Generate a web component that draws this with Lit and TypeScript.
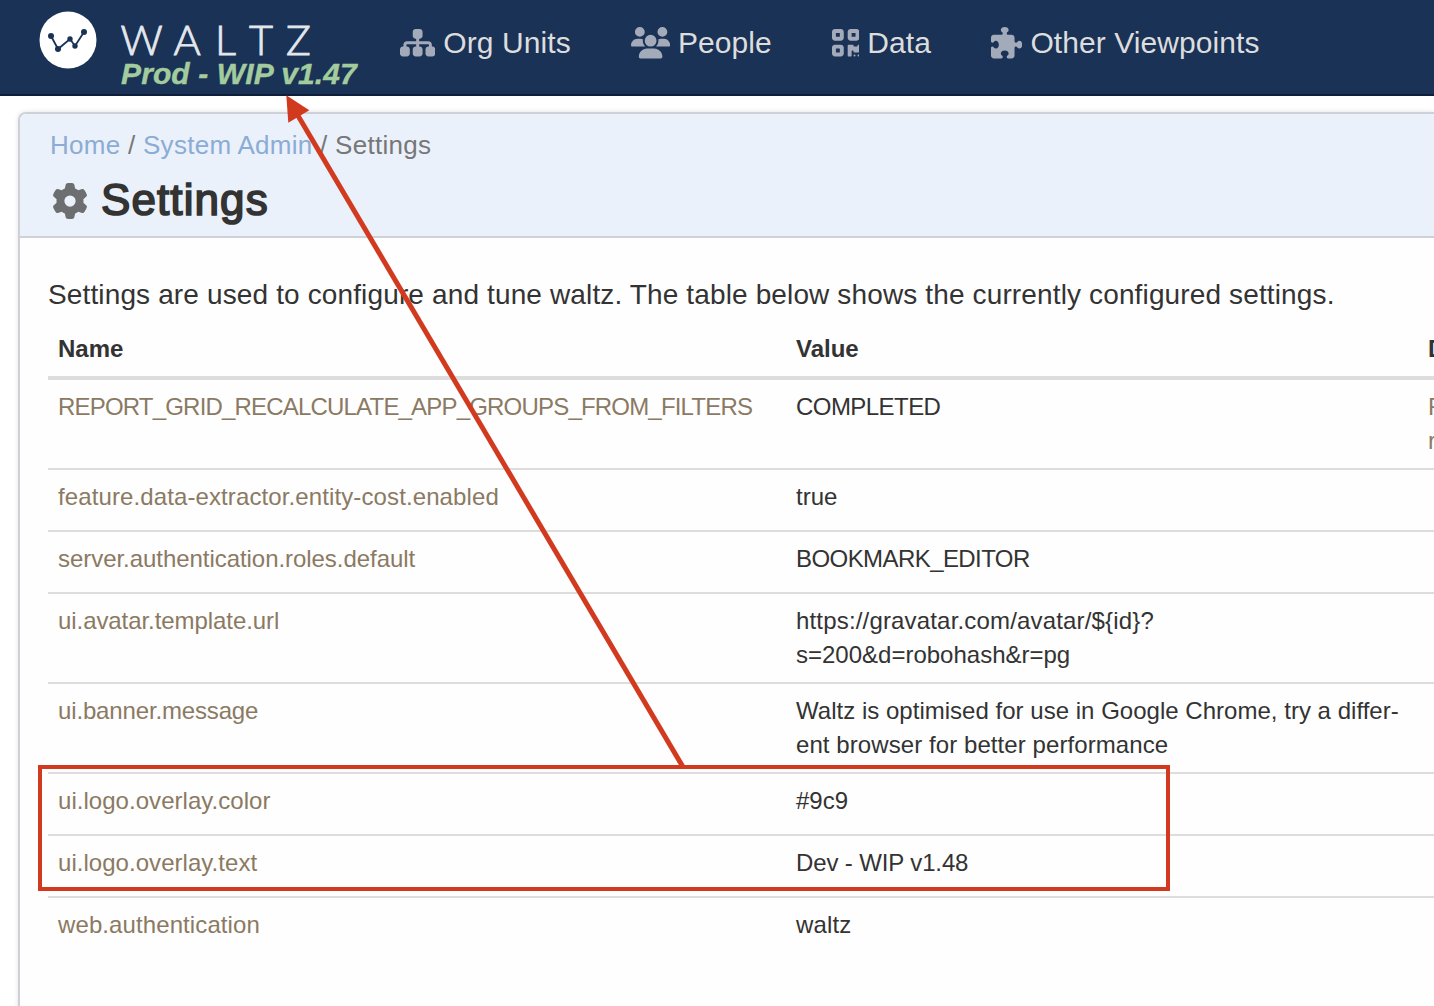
import { LitElement, html, css, svg } from "lit";
import { customElement } from "lit/decorators.js";
import { styleMap } from "lit/directives/style-map.js";

const icons = {
  sitemap: {
    w: 576,
    d: "M208 80c0-26.5 21.5-48 48-48h64c26.5 0 48 21.5 48 48v64c0 26.5-21.5 48-48 48h-8v40H464c30.9 0 56 25.1 56 56v32h8c26.5 0 48 21.5 48 48v64c0 26.5-21.5 48-48 48H464c-26.5 0-48-21.5-48-48V368c0-26.5 21.5-48 48-48h8V288c0-4.4-3.6-8-8-8H312v40h8c26.5 0 48 21.5 48 48v64c0 26.5-21.5 48-48 48H256c-26.5 0-48-21.5-48-48V368c0-26.5 21.5-48 48-48h8V280H112c-4.4 0-8 3.6-8 8v32h8c26.5 0 48 21.5 48 48v64c0 26.5-21.5 48-48 48H48c-26.5 0-48-21.5-48-48V368c0-26.5 21.5-48 48-48h8V288c0-30.9 25.1-56 56-56H264V192h-8c-26.5 0-48-21.5-48-48V80z",
  },
  users: {
    w: 640,
    d: "M144 0a80 80 0 1 1 0 160A80 80 0 1 1 144 0zM512 0a80 80 0 1 1 0 160A80 80 0 1 1 512 0zM0 298.7C0 239.8 47.8 192 106.7 192h42.7c15.9 0 31 3.5 44.6 9.7c-1.3 7.2-1.9 14.7-1.9 22.3c0 38.2 16.8 72.5 43.3 96c-.2 0-.4 0-.7 0H21.3C9.6 320 0 310.4 0 298.7zM405.3 320c-.2 0-.4 0-.7 0c26.6-23.5 43.3-57.8 43.3-96c0-7.6-.7-15-1.9-22.3c13.6-6.3 28.7-9.7 44.6-9.7h42.7C592.2 192 640 239.8 640 298.7c0 11.8-9.6 21.3-21.3 21.3H405.3zM224 224a96 96 0 1 1 192 0 96 96 0 1 1 -192 0zM128 485.3C128 411.7 187.7 352 261.3 352H378.7C452.3 352 512 411.7 512 485.3c0 14.7-11.9 26.7-26.7 26.7H154.7c-14.7 0-26.7-11.9-26.7-26.7z",
  },
  qrcode: {
    w: 448,
    d: "M0 80C0 53.5 21.5 32 48 32h96c26.5 0 48 21.5 48 48v96c0 26.5-21.5 48-48 48H48c-26.5 0-48-21.5-48-48V80zM64 96v64h64V96H64zM0 336c0-26.5 21.5-48 48-48h96c26.5 0 48 21.5 48 48v96c0 26.5-21.5 48-48 48H48c-26.5 0-48-21.5-48-48V336zm64 16v64h64V352H64zM304 32h96c26.5 0 48 21.5 48 48v96c0 26.5-21.5 48-48 48H304c-26.5 0-48-21.5-48-48V80c0-26.5 21.5-48 48-48zm80 64H320v64h64V96zM256 304c0-8.8 7.2-16 16-16h64c8.8 0 16 7.2 16 16s7.2 16 16 16h32c8.8 0 16-7.2 16-16s7.2-16 16-16s16 7.2 16 16v96c0 8.8-7.2 16-16 16H368c-8.8 0-16-7.2-16-16s-7.2-16-16-16s-16 7.2-16 16v64c0 8.8-7.2 16-16 16H272c-8.8 0-16-7.2-16-16V304zM368 480a16 16 0 1 1 0-32 16 16 0 1 1 0 32zm64 0a16 16 0 1 1 0-32 16 16 0 1 1 0 32z",
  },
  puzzle: {
    w: 512,
    d: "M192 104.8c0-9.2-5.8-17.3-13.2-22.8C167.2 73.3 160 61.3 160 48c0-26.5 28.7-48 64-48s64 21.5 64 48c0 13.3-7.2 25.3-18.8 34c-7.4 5.5-13.2 13.6-13.2 22.8v0c0 12.8 10.4 23.2 23.2 23.2H336c26.5 0 48 21.5 48 48v56.8c0 12.8 10.4 23.2 23.2 23.2v0c9.2 0 17.3-5.8 22.8-13.2c8.7-11.6 20.7-18.8 34-18.8c26.5 0 48 28.7 48 64s-21.5 64-48 64c-13.3 0-25.3-7.2-34-18.8c-5.5-7.4-13.6-13.2-22.8-13.2v0c-12.8 0-23.2 10.4-23.2 23.2V464c0 26.5-21.5 48-48 48H279.2c-12.8 0-23.2-10.4-23.2-23.2v0c0-9.2 5.8-17.3 13.2-22.8c11.6-8.7 18.8-20.7 18.8-34c0-26.5-28.7-48-64-48s-64 21.5-64 48c0 13.3 7.2 25.3 18.8 34c7.4 5.5 13.2 13.6 13.2 22.8v0c0 12.8-10.4 23.2-23.2 23.2H48c-26.5 0-48-21.5-48-48V343.2C0 330.4 10.4 320 23.2 320v0c9.2 0 17.3 5.8 22.8 13.2C54.7 344.8 66.7 352 80 352c26.5 0 48-28.7 48-64s-21.5-64-48-64c-13.3 0-25.3 7.2-34 18.8C40.5 250.2 32.4 256 23.2 256v0C10.4 256 0 245.6 0 232.8V176c0-26.5 21.5-48 48-48H168.8c12.8 0 23.2-10.4 23.2-23.2v0z",
  },
  gear: {
    w: 512,
    d: "M495.9 166.6c3.2 8.7 .5 18.4-6.4 24.6l-43.3 39.4c1.1 8.3 1.7 16.8 1.7 25.4s-.6 17.1-1.7 25.4l43.3 39.4c6.9 6.2 9.6 15.9 6.4 24.6c-4.4 11.9-9.7 23.3-15.8 34.3l-4.7 8.1c-6.6 11-14 21.4-22.1 31.2c-5.9 7.2-15.7 9.6-24.5 6.8l-55.7-17.7c-13.4 10.3-28.2 18.9-44 25.4l-12.5 57.1c-2 9.1-9 16.3-18.2 17.8c-13.8 2.3-28 3.5-42.5 3.5s-28.7-1.2-42.5-3.5c-9.2-1.5-16.2-8.7-18.2-17.8l-12.5-57.1c-15.8-6.5-30.6-15.1-44-25.4L83.1 425.9c-8.8 2.8-18.6 .3-24.5-6.8c-8.1-9.8-15.5-20.2-22.1-31.2l-4.7-8.1c-6.1-11-11.4-22.4-15.8-34.3c-3.2-8.7-.5-18.4 6.4-24.6l43.3-39.4C64.6 273.1 64 264.6 64 256s.6-17.1 1.7-25.4L22.4 191.2c-6.9-6.2-9.6-15.9-6.4-24.6c4.4-11.9 9.7-23.3 15.8-34.3l4.7-8.1c6.6-11 14-21.4 22.1-31.2c5.9-7.2 15.7-9.6 24.5-6.8l55.7 17.7c13.4-10.3 28.2-18.9 44-25.4l12.5-57.1c2-9.1 9-16.3 18.2-17.8C227.3 1.2 241.5 0 256 0s28.7 1.2 42.5 3.5c9.2 1.5 16.2 8.7 18.2 17.8l12.5 57.1c15.8 6.5 30.6 15.1 44 25.4l55.7-17.7c8.8-2.8 18.6-.3 24.5 6.8c8.1 9.8 15.5 20.2 22.1 31.2l4.7 8.1c6.1 11 11.4 22.4 15.8 34.3zM256 336a80 80 0 1 0 0-160 80 80 0 1 0 0 160z",
  },
};

const icon = (name: keyof typeof icons) =>
  html`<svg class="icon" viewBox="0 0 ${icons[name].w} 512" aria-hidden="true">${svg`<path d=${icons[name].d} />`}</svg>`;

const nav: { icon: keyof typeof icons; label: string }[] = [
  { icon: "sitemap", label: "Org Units" },
  { icon: "users", label: "People" },
  { icon: "qrcode", label: "Data" },
  { icon: "puzzle", label: "Other Viewpoints" },
];

// A line of text with its tracking in pixels.
type Line = [text: string, tracking: number];

const settings: { name: Line; value: Line[]; description?: Line[] }[] = [
  {
    name: ["REPORT_GRID_RECALCULATE_APP_GROUPS_FROM_FILTERS", -0.81],
    value: [["COMPLETED", -0.55]],
    description: [["R", 0], ["r", 0]],
  },
  { name: ["feature.data-extractor.entity-cost.enabled", 0.11], value: [["true", 0]] },
  { name: ["server.authentication.roles.default", -0.05], value: [["BOOKMARK_EDITOR", -0.57]] },
  {
    name: ["ui.avatar.template.url", -0.07],
    value: [["https://gravatar.com/avatar/${id}?", 0.17], ["s=200&d=robohash&r=pg", 0]],
  },
  {
    name: ["ui.banner.message", -0.15],
    value: [
      ["Waltz is optimised for use in Google Chrome, try a differ-", 0.02],
      ["ent browser for better performance", 0.08],
    ],
  },
  { name: ["ui.logo.overlay.color", 0.04], value: [["#9c9", 0]] },
  { name: ["ui.logo.overlay.text", 0.04], value: [["Dev - WIP v1.48", -0.13]] },
  { name: ["web.authentication", 0.1], value: [["waltz", 0.15]] },
];

const line = ([text, tracking]: Line) =>
  html`<div style=${styleMap({ letterSpacing: `${tracking}px` })}>${text}</div>`;

@customElement("app-root")
export class AppRoot extends LitElement {
  static styles = css`
    :host {
      display: block;
      position: relative;
      width: 1434px;
      height: 1006px;
      overflow: hidden;
      background: #fff;
      color: #333;
      font-family: "Liberation Sans", Arial, sans-serif;
    }
    * { box-sizing: border-box; }
    .icon { display: block; fill: currentColor; flex: none; }
    .navbar {
      display: flex;
      height: 96px;
      background: #1a3255;
      border-bottom: 2px solid #0f1f3b;
    }
    .brand { position: relative; width: 400px; flex: none; }
    .logo { display: block; width: 400px; height: 94px; }
    .wordmark {
      font-family: Lato, sans-serif;
      font-weight: 300;
      font-size: 41.5px;
      fill: #e4e7ec;
      stroke: #e4e7ec;
      stroke-width: 0.9px;
    }
    .overlay {
      position: absolute;
      left: 121px;
      top: 56px;
      line-height: 36px;
      font-size: 30px;
      font-weight: 700;
      font-style: italic;
      letter-spacing: 0.12px;
      white-space: nowrap;
      color: #a3cc9e;
      -webkit-text-stroke: 0.4px #a3cc9e;
    }
    .menu { display: flex; gap: 60px; height: 86px; align-items: center; }
    .item { display: flex; align-items: center; gap: 8px; color: #ddd; font-size: 30px; letter-spacing: 0.08px; white-space: nowrap; }
    .item .icon { height: 31.4px; color: #a3abba; }
    .panel {
      margin: 16px 0 0 18px;
      height: 910px;
      border: 2px solid #cfd1d8;
      border-right: 0;
      border-bottom: 0;
      border-radius: 8px 0 0 0;
      box-shadow: 0 0 5px rgba(0, 0, 0, 0.12);
      background: #fefefe;
    }
    .head {
      height: 124px;
      padding: 14px 30px 0 31px;
      background: #eaf1fb;
      border-bottom: 2px solid #cfd1d8;
      border-radius: 6px 0 0 0;
    }
    .crumbs { margin-left: -1px; font-size: 26px; line-height: 34px; color: #777; white-space: pre; letter-spacing: 0.28px; }
    .crumbs a { color: #8aacd5; }
    .title { display: flex; align-items: center; gap: 13px; margin: 12px 0 0 1px; height: 52px; }
    .title .icon { height: 36px; position: relative; top: 1px; }
    .title .icon { color: #6c6e70; }
    h1 { margin: 0; font-size: 44px; line-height: 52px; font-weight: 400; -webkit-text-stroke: 1.7px #333; letter-spacing: 1.1px; }
    .body { padding: 38px 0 0 28px; }
    .intro { margin: 0; font-size: 28px; line-height: 38px; white-space: nowrap; letter-spacing: 0.135px; }
    .row {
      display: grid;
      grid-template-columns: 738px 632px 200px;
      width: 1570px;
      min-height: 62px;
      padding: 10px 0 10px 10px;
      border-bottom: 2px solid #ddd;
      font-size: 24px;
      line-height: 34px;
      white-space: nowrap;
    }
    .row:last-child { border-bottom: 0; }
    .row.header { min-height: 0; height: 66px; padding-top: 18px; border-bottom: 4px solid #ddd; font-weight: 700; }
    .name, .desc { color: #8b7a63; }
    .annotation { position: absolute; left: 0; top: 0; pointer-events: none; }
  `;

  render() {
    return html`
      <header class="navbar">
        <div class="brand">
          <svg class="logo" viewBox="0 0 400 94">
            <circle cx="68" cy="40" r="28.5" fill="#fff" />
            <g fill="#1a3255">
              <path d="M51 36 58 49 70 39 75 46 84 32" fill="none" stroke="#1a3255" stroke-width="1.8" />
              <circle cx="51" cy="36" r="3" />
              <circle cx="58" cy="49" r="3" />
              <circle cx="70" cy="39" r="2.7" />
              <circle cx="75" cy="46" r="2.7" />
              <circle cx="84" cy="32" r="3" />
            </g>
            <text class="wordmark" x="120.5 173.5 215 249 286" y="54.5">WALTZ</text>
          </svg>
          <div class="overlay">Prod - WIP v1.47</div>
        </div>
        <nav class="menu">
          ${nav.map((n) => html`<div class="item">${icon(n.icon)}<span>${n.label}</span></div>`)}
        </nav>
      </header>
      <main class="panel">
        <div class="head">
          <div class="crumbs"><a>Home</a> / <a>System Admin</a> / Settings</div>
          <div class="title">${icon("gear")}<h1>Settings</h1></div>
        </div>
        <div class="body">
          <p class="intro">Settings are used to configure and tune waltz. The table below shows the currently configured settings.</p>
          <div class="table">
            <div class="row header"><div>Name</div><div>Value</div><div>Description</div></div>
            ${settings.map(
              (s) => html`<div class="row">
                <div class="name">${line(s.name)}</div>
                <div>${s.value.map(line)}</div>
                <div class="desc">${s.description?.map(line)}</div>
              </div>`,
            )}
          </div>
        </div>
      </main>
      <svg class="annotation" width="1434" height="1006" viewBox="0 0 1434 1006">
        <g fill="none" stroke="#d23a20">
          <rect x="40" y="767" width="1128" height="122" stroke-width="4" />
          <path d="M297 114 683 767" stroke-width="5" />
        </g>
        <path d="M286.3 95.2 309.3 110.3 288.3 122.7Z" fill="#d23a20" />
      </svg>
    `;
  }
}
